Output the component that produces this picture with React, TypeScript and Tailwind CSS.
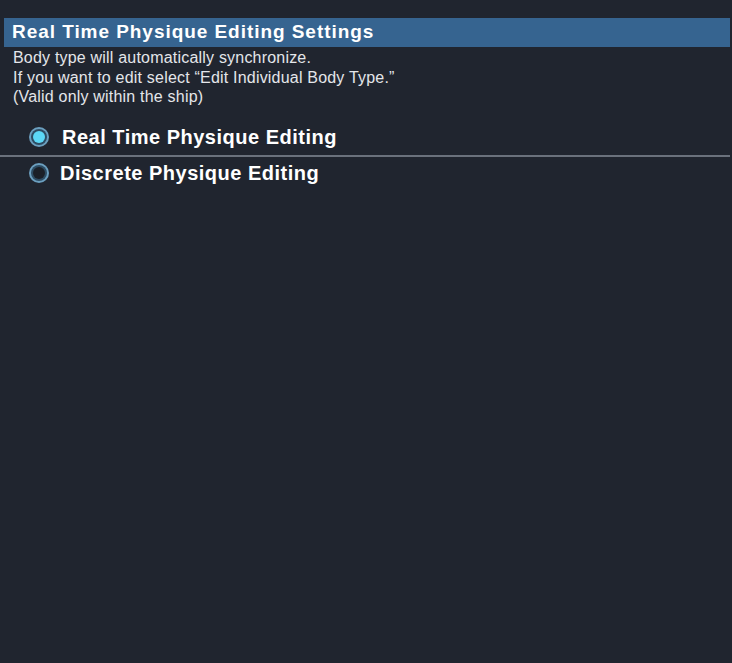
import React, { useState } from 'react'

const options = [
    { id: 'realtime', label: 'Real Time Physique Editing' },
    { id: 'discrete', label: 'Discrete Physique Editing' },
]

// octagon-ish radio: light rim, dark ring, fill
const Radio = ({ on }: { on: boolean }) => (
    <div className="w-[20px] h-[20px] rounded-full bg-[#6b9fbf] p-[2px] shrink-0">
        <div className="w-full h-full rounded-full bg-[#2d4c63] p-[2px]">
            <div className={`w-full h-full rounded-full ${on ? 'bg-[#5cd8f7]' : 'bg-[#1b2028]'}`} />
        </div>
    </div>
)

export default function App() {
    const [mode, setMode] = useState('realtime')

    return (
        <div className="w-[732px] h-[663px] bg-[#20252f] pt-[18px] overflow-hidden" style={{ fontFamily: '"Liberation Sans", Arial, sans-serif' }}>
            {/* Title bar */}
            <div className="ml-[4px] mr-[2px] h-[29px] bg-[#366490] flex items-center pl-[8px]">
                <h1 className="text-[19px] font-bold text-white leading-none tracking-[0.95px] -mt-[2px]">Real Time Physique Editing Settings</h1>
            </div>

            {/* Description */}
            <div className="pl-[13px] pt-[1px] text-[16px] leading-[19.5px] tracking-[0.2px] text-[#e4e6ea]">
                <p>Body type will automatically synchronize.</p>
                <p>If you want to edit select “Edit Individual Body Type.”</p>
                <p>(Valid only within the ship)</p>
            </div>

            {/* Options */}
            <div className="mt-[12px] mr-[2px]">
                {options.map((o, i) => (
                    <div key={o.id}>
                        {i > 0 && <div className="h-[2px] bg-[#6a717c]" />}
                        <button
                            onClick={() => setMode(o.id)}
                            className={`w-full flex items-center gap-[12px] pl-[29px] text-left ${i === 0 ? 'h-[36px]' : 'h-[32px]'}`}
                        >
                            <Radio on={mode === o.id} />
                            <span className={`text-[20px] font-bold text-white tracking-[0.5px] ${i === 0 ? 'ml-[1px]' : '-ml-[1px]'}`}>{o.label}</span>
                        </button>
                    </div>
                ))}
            </div>
        </div>
    )
}
